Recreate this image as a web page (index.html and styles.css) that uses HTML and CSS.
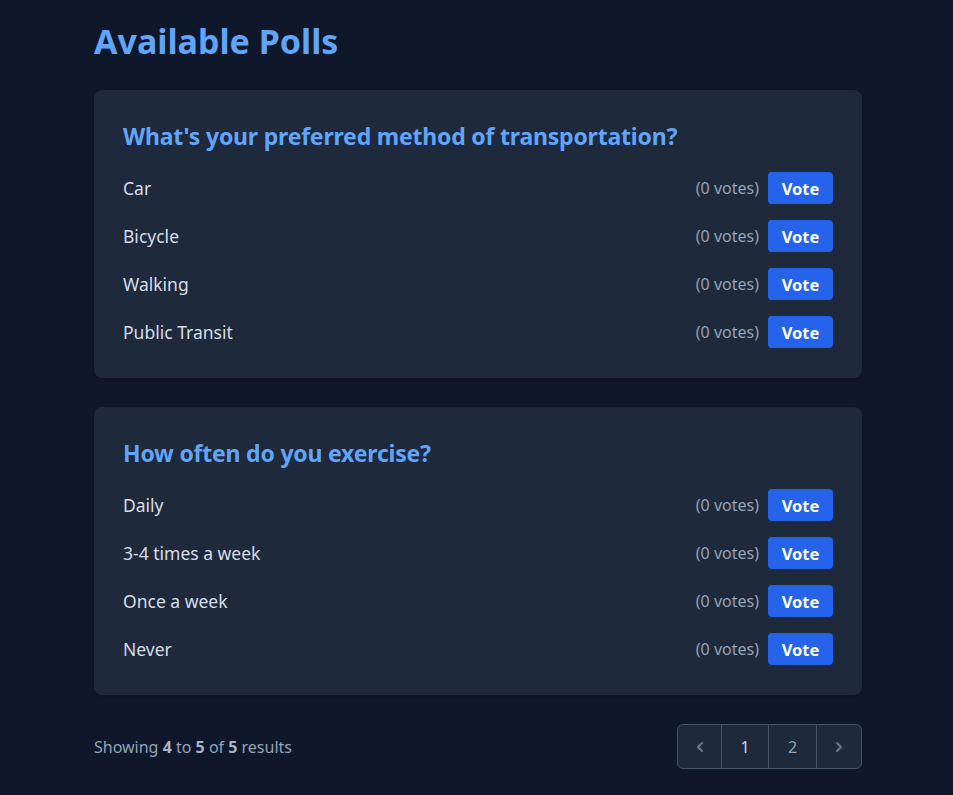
FILE: index.html
```html
<!DOCTYPE html>
<html lang="en">
<head>
<meta charset="utf-8">
<title>Available Polls</title>
<link rel="stylesheet" href="styles.css">
</head>
<body>
<main class="container">
  <h1 class="page-title">Available Polls</h1>

  <section class="poll-card">
    <h2 class="poll-title">What's your preferred method of transportation?</h2>
    <ul class="options">
      <li class="option"><span class="option-label">Car</span><span class="option-actions"><span class="votes">(0 votes)</span><button class="vote-btn">Vote</button></span></li>
      <li class="option"><span class="option-label">Bicycle</span><span class="option-actions"><span class="votes">(0 votes)</span><button class="vote-btn">Vote</button></span></li>
      <li class="option"><span class="option-label">Walking</span><span class="option-actions"><span class="votes">(0 votes)</span><button class="vote-btn">Vote</button></span></li>
      <li class="option"><span class="option-label">Public Transit</span><span class="option-actions"><span class="votes">(0 votes)</span><button class="vote-btn">Vote</button></span></li>
    </ul>
  </section>

  <section class="poll-card">
    <h2 class="poll-title">How often do you exercise?</h2>
    <ul class="options">
      <li class="option"><span class="option-label">Daily</span><span class="option-actions"><span class="votes">(0 votes)</span><button class="vote-btn">Vote</button></span></li>
      <li class="option"><span class="option-label">3-4 times a week</span><span class="option-actions"><span class="votes">(0 votes)</span><button class="vote-btn">Vote</button></span></li>
      <li class="option"><span class="option-label">Once a week</span><span class="option-actions"><span class="votes">(0 votes)</span><button class="vote-btn">Vote</button></span></li>
      <li class="option"><span class="option-label">Never</span><span class="option-actions"><span class="votes">(0 votes)</span><button class="vote-btn">Vote</button></span></li>
    </ul>
  </section>

  <nav class="pager-row">
    <p class="summary">Showing <b>4</b> to <b>5</b> of <b>5</b> results</p>
    <div class="pager">
      <a class="page-cell arrow" href="#" aria-label="Previous">
        <svg width="10" height="12" viewBox="0 0 10 12" fill="none" stroke="currentColor" stroke-width="2.4" stroke-linecap="round" stroke-linejoin="round"><polyline points="7,2 3,6 7,10"/></svg>
      </a>
      <a class="page-cell current" href="#">1</a>
      <a class="page-cell" href="#">2</a>
      <a class="page-cell arrow" href="#" aria-label="Next">
        <svg width="10" height="12" viewBox="0 0 10 12" fill="none" stroke="currentColor" stroke-width="2.4" stroke-linecap="round" stroke-linejoin="round"><polyline points="3,2 7,6 3,10"/></svg>
      </a>
    </div>
  </nav>
</main>
</body>
</html>
```

FILE: styles.css
```css
* { box-sizing: border-box; }
html, body {
  margin: 0;
  background: #0f172a;
  font-family: "Noto Sans", "Open Sans", sans-serif;
  color: #e2e8f0;
}
body {
  padding: 0 0 0 3px;
}
.container {
  width: 768px;
  margin: 0 auto;
  padding: 21px 0 24px;
}
.page-title {
  margin: 0 0 29px;
  font-size: 34px;
  line-height: 40px;
  font-weight: 700;
  color: #60a5fa;
}
.poll-card {
  background: #1e293b;
  border-radius: 8px;
  padding: 30px 29px 30px;
  margin-bottom: 29px;
  box-shadow: 0 1px 3px rgba(0,0,0,0.3);
}
.poll-title {
  margin: 0 0 20px;
  font-size: 23px;
  line-height: 32px;
  font-weight: 700;
  color: #60a5fa;
  letter-spacing: -0.2px;
}
.options {
  list-style: none;
  margin: 0;
  padding: 0;
  display: flex;
  flex-direction: column;
  gap: 16px;
}
.option {
  display: flex;
  align-items: center;
  justify-content: space-between;
  height: 32px;
}
.option-label {
  font-size: 17.5px;
  color: #d5dde8;
}
.option-actions {
  display: flex;
  align-items: center;
  gap: 9px;
}
.votes {
  font-size: 16px;
  color: #94a3b8;
}
.vote-btn {
  font-family: inherit;
  background: #2563eb;
  color: #ffffff;
  border: none;
  border-radius: 4px;
  width: 65px;
  height: 32px;
  font-size: 16.5px;
  font-weight: 700;
  padding: 0;
  cursor: pointer;
}
.pager-row {
  display: flex;
  align-items: center;
  justify-content: space-between;
  margin-top: 29px;
}
.summary {
  margin: 0;
  font-size: 16px;
  color: #94a3b8;
}
.summary b {
  font-weight: 700;
  color: #a8b5c7;
}
.pager {
  display: flex;
  height: 45px;
  border: 1px solid #475569;
  border-radius: 6px;
  background: #1e293b;
  overflow: hidden;
}
.page-cell {
  display: flex;
  align-items: center;
  justify-content: center;
  width: 47px;
  text-decoration: none;
  font-size: 16px;
  color: #94a3b8;
  border-left: 1px solid #475569;
}
.page-cell:first-child { border-left: none; width: 43px; }
.page-cell:nth-child(3) { width: 48px; }
.page-cell:last-child { width: 45px; }
.page-cell.current { color: #cbd5e1; }
.page-cell.arrow { color: #64748b; }
```
